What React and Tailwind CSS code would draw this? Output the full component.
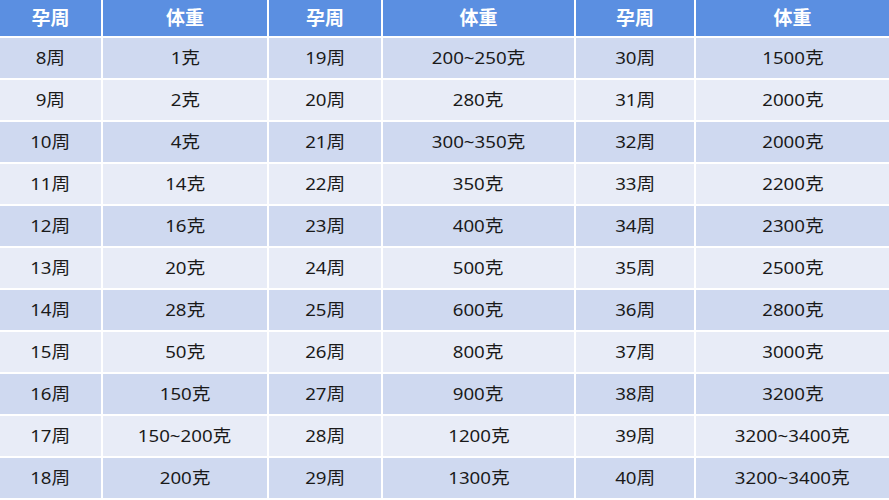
import React from "react";

const rows = [
  ["8周", "1克", "19周", "200~250克", "30周", "1500克"],
  ["9周", "2克", "20周", "280克", "31周", "2000克"],
  ["10周", "4克", "21周", "300~350克", "32周", "2000克"],
  ["11周", "14克", "22周", "350克", "33周", "2200克"],
  ["12周", "16克", "23周", "400克", "34周", "2300克"],
  ["13周", "20克", "24周", "500克", "35周", "2500克"],
  ["14周", "28克", "25周", "600克", "36周", "2800克"],
  ["15周", "50克", "26周", "800克", "37周", "3000克"],
  ["16周", "150克", "27周", "900克", "38周", "3200克"],
  ["17周", "150~200克", "28周", "1200克", "39周", "3200~3400克"],
  ["18周", "200克", "29周", "1300克", "40周", "3200~3400克"],
];

const header = ["孕周", "体重", "孕周", "体重", "孕周", "体重"];

export default function App() {
  return (
    <div
      className="w-[889px] h-[500px] bg-white overflow-hidden"
      style={{ fontFamily: '"Noto Sans", "Noto Sans CJK SC", sans-serif' }}
    >
      <div className="grid grid-cols-[101px_164px_112px_191px_118px_193px] gap-[2px] auto-rows-[40px] grid-rows-[36px]">
        {header.map((h, i) => (
          <div
            key={"h" + i}
            className="bg-[#5b8fe1] text-white font-bold text-[19px] flex items-center justify-center"
          >
            {h}
          </div>
        ))}
        {rows.map((r, ri) =>
          r.map((c, ci) => (
            <div
              key={ri + "-" + ci}
              className={
                (ri % 2 === 0 ? "bg-[#cfd9f0]" : "bg-[#e8ecf7]") +
                " text-[#1a1a1a] text-[17px] flex items-center justify-center"
              }
            >
              <span className="inline-block scale-x-[1.1]">{c}</span>
            </div>
          ))
        )}
      </div>
    </div>
  );
}
